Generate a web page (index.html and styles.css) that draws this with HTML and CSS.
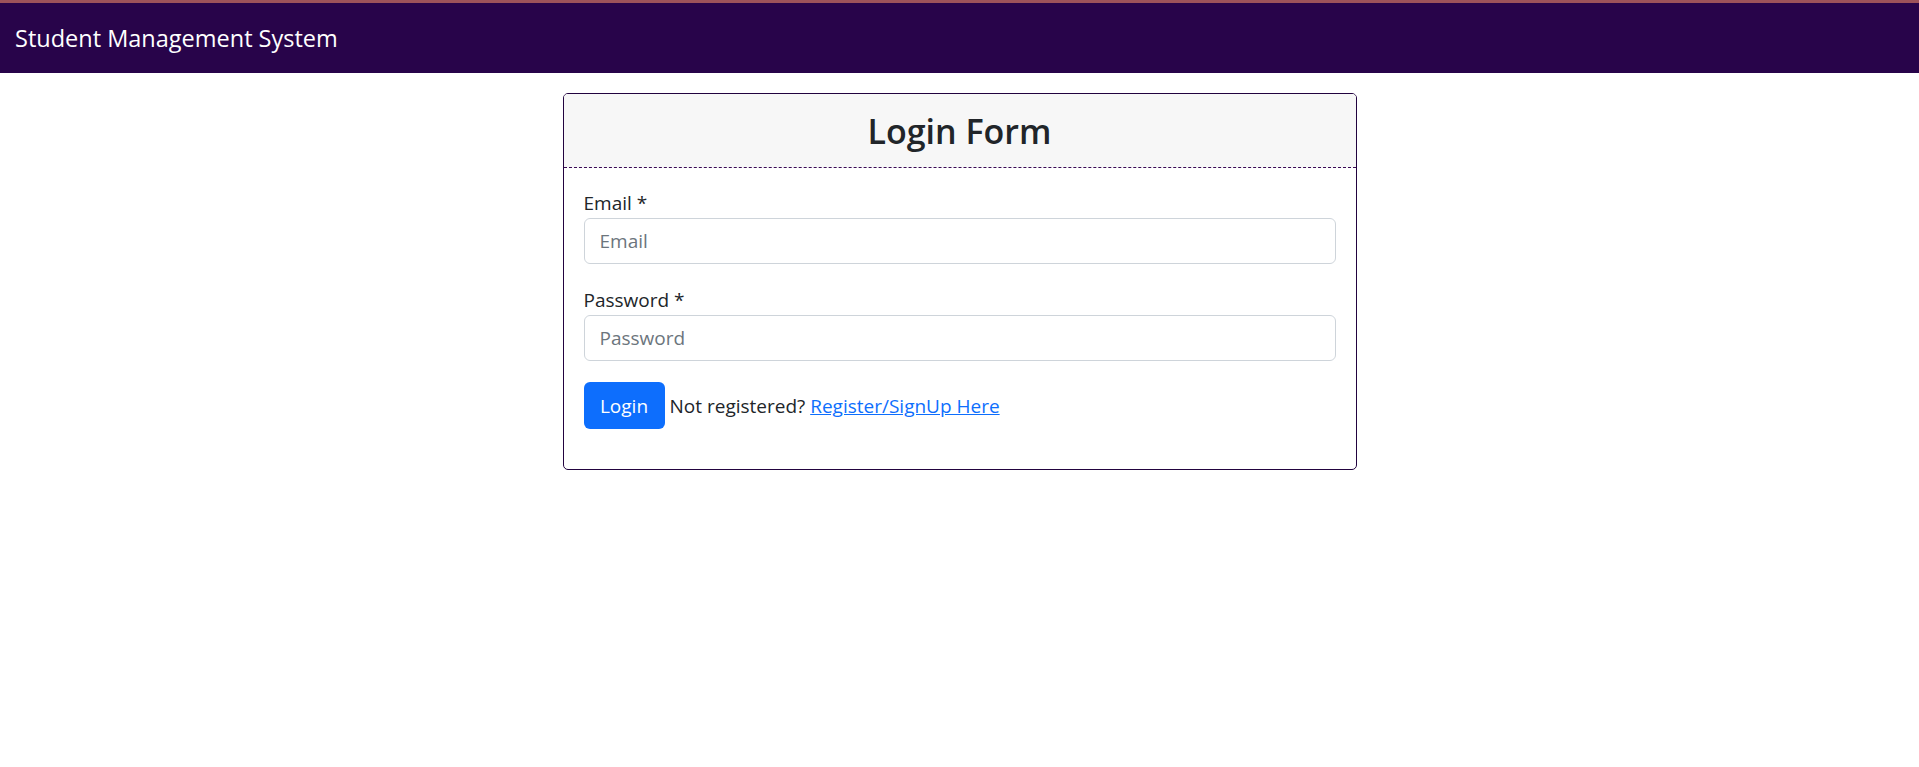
FILE: index.html
```html
<!DOCTYPE html>
<html lang="en">
<head>
<meta charset="utf-8">
<title>Student Management System</title>
<link rel="stylesheet" href="styles.css">
</head>
<body>
<nav class="navbar">
  <a class="brand" href="#">Student Management System</a>
</nav>
<main class="page">
  <div class="card">
    <div class="card-header">
      <h2 class="title">Login Form</h2>
    </div>
    <form class="card-body">
      <div class="field">
        <label class="label" for="email">Email *</label>
        <input class="input" id="email" type="email" placeholder="Email">
      </div>
      <div class="field">
        <label class="label" for="password">Password *</label>
        <input class="input" id="password" type="password" placeholder="Password">
      </div>
      <div class="actions">
        <button class="btn" type="button">Login</button>
        <span class="note">Not registered? <a class="link" href="#">Register/SignUp Here</a></span>
      </div>
    </form>
  </div>
</main>
</body>
</html>
```
FILE: styles.css
```css
* { box-sizing: border-box; }
html, body { margin: 0; padding: 0; }
body {
  font-family: "Open Sans", "Noto Sans", sans-serif;
  font-size: 19px;
  line-height: 30px;
  color: #212529;
  background: #fff;
}
.navbar {
  height: 73px;
  background: #28044a;
  border-top: 3px solid #9d535a;
  display: flex;
  align-items: center;
  padding: 0 15px;
}
.brand {
  color: #fff;
  text-decoration: none;
  font-size: 23.5px;
  line-height: 36px;
}
.page {
  display: flex;
  justify-content: center;
  padding-top: 20px;
}
.card {
  width: 794px;
  border: 1px solid #22033f;
  border-radius: 5px;
  overflow: hidden;
}
.card-header {
  background: #f7f7f7;
  border-bottom: 1px dashed #3a0a55;
  height: 74px;
  display: flex;
  align-items: center;
  justify-content: center;
}
.title {
  margin: 0;
  font-size: 34px;
  font-weight: 600;
  line-height: 40px;
  color: #212529;
}
.card-body {
  margin: 0;
  padding: 20px 20px 40px;
  display: flex;
  flex-direction: column;
  gap: 21px;
}
.field {
  display: flex;
  flex-direction: column;
}
.label {
  line-height: 30px;
}
.input {
  height: 46px;
  border: 1px solid #ced4da;
  border-radius: 6px;
  padding: 0 15px;
  font-family: inherit;
  font-size: 19px;
  color: #212529;
}
.input::placeholder { color: #6c757d; }
.actions {
  display: flex;
  align-items: center;
  gap: 5px;
}
.btn {
  height: 47px;
  width: 81px;
  background: #0d6efd;
  color: #fff;
  border: 0;
  border-radius: 6px;
  font-family: inherit;
  font-size: 19px;
  padding: 0;
}
.link { color: #0d6efd; text-decoration: underline; }
```
